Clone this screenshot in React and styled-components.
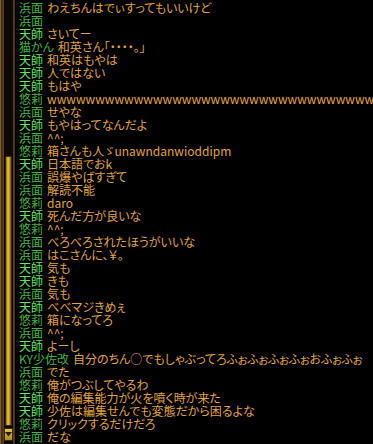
import React from "react";
import styled, { createGlobalStyle } from "styled-components";

const GlobalStyle = createGlobalStyle`
  html, body {
    margin: 0;
    padding: 0;
    background: #000;
  }
  body {
    font-family: "Noto Sans CJK JP", "Noto Sans", sans-serif;
  }
`;

const W = "w".repeat(48);

const log = [
  ["浜面", "わえちんはでぃすってもいいけど"],
  ["浜面", ""],
  ["天師", "さいてー"],
  ["猫かん", "和英さん「・・・・。」"],
  ["天師", "和英はもやは"],
  ["天師", "人ではない"],
  ["天師", "もはや"],
  ["悠莉", W],
  ["浜面", "せやな"],
  ["天師", "もやはってなんだよ"],
  ["浜面", "^^;"],
  ["悠莉", "箱さんも人ゞunawndanwioddipm"],
  ["天師", "日本語でおk"],
  ["浜面", "誤爆やばすぎて"],
  ["浜面", "解読不能"],
  ["悠莉", "daro"],
  ["天師", "死んだ方が良いな"],
  ["悠莉", "^^;"],
  ["浜面", "べろべろされたほうがいいな"],
  ["浜面", "はこさんに、￥。"],
  ["天師", "気も"],
  ["天師", "きも"],
  ["浜面", "気も"],
  ["天師", "べべマジきめぇ"],
  ["悠莉", "箱になってろ"],
  ["浜面", "^^;"],
  ["天師", "よーし"],
  ["KY少佐改", "自分のちん○でもしゃぶってろふぉふぉふぉふぉおふぉふぉ"],
  ["浜面", "でた"],
  ["悠莉", "俺がつぶしてやるわ"],
  ["天師", "俺の編集能力が火を噴く時が来た"],
  ["天師", "少佐は編集せんでも変態だから困るよな"],
  ["悠莉", "クリックするだけだろ"],
  ["浜面", "だな"],
];

const nameColors = {
  天師: "#5fe65f",
};

export default function App() {
  return (
    <>
      <GlobalStyle />
      <Window>
        <ScrollBar>
          <Track>
            <Thumb />
            <ArrowButton>
              <svg width="7" height="5" viewBox="0 0 7 5">
                <path d="M0 0h7L3.5 4.5z" fill="#2a1a06" />
              </svg>
            </ArrowButton>
          </Track>
        </ScrollBar>
        <Log>
          {log.map(([name, text], i) => (
            <Row key={i}>
              <Name color={nameColors[name]}>{name}</Name>
              <Message>{text}</Message>
            </Row>
          ))}
        </Log>
      </Window>
    </>
  );
}

const Window = styled.div`
  display: flex;
  width: 373px;
  height: 444px;
  overflow: hidden;
  background: #000;
`;

const ScrollBar = styled.div`
  width: 16px;
  height: 444px;
  flex-shrink: 0;
  box-sizing: border-box;
  border-left: 1px solid #7b5a36;
  border-right: 1px solid #000;
  background: #4a3118;
  padding: 0 1px 0 2px;
`;

const Track = styled.div`
  height: 100%;
  box-sizing: border-box;
  background: #0d0804;
  border-left: 1px solid #5a3c1d;
  border-right: 1px solid #5a3c1d;
  display: flex;
  flex-direction: column;
  padding-top: 156px;
`;

const Thumb = styled.div`
  flex: 1;
  margin: 0 1px;
  border: 1px solid #3a2506;
  background: linear-gradient(90deg, #8a6a10 0%, #e8c840 40%, #c09a1c 70%, #6a4c08 100%);
`;

const ArrowButton = styled.div`
  height: 11px;
  margin: 2px 0 3px;
  display: flex;
  align-items: center;
  justify-content: center;
  background: linear-gradient(180deg, #e8c440, #b08a18);
  border: 1px solid #3a2506;
`;

const Log = styled.div`
  flex: 1;
  padding: 1px 0 0 3px;
  display: flex;
  flex-direction: column;
`;

const Row = styled.div`
  display: flex;
  height: 13px;
  line-height: 13px;
  font-size: 12px;
  white-space: nowrap;
  font-feature-settings: "palt";
`;

const Name = styled.span`
  color: ${(p) => p.color || "#3fb43f"};
  margin-right: 4px;
`;

const Message = styled.span`
  color: #e2a23c;
`;
